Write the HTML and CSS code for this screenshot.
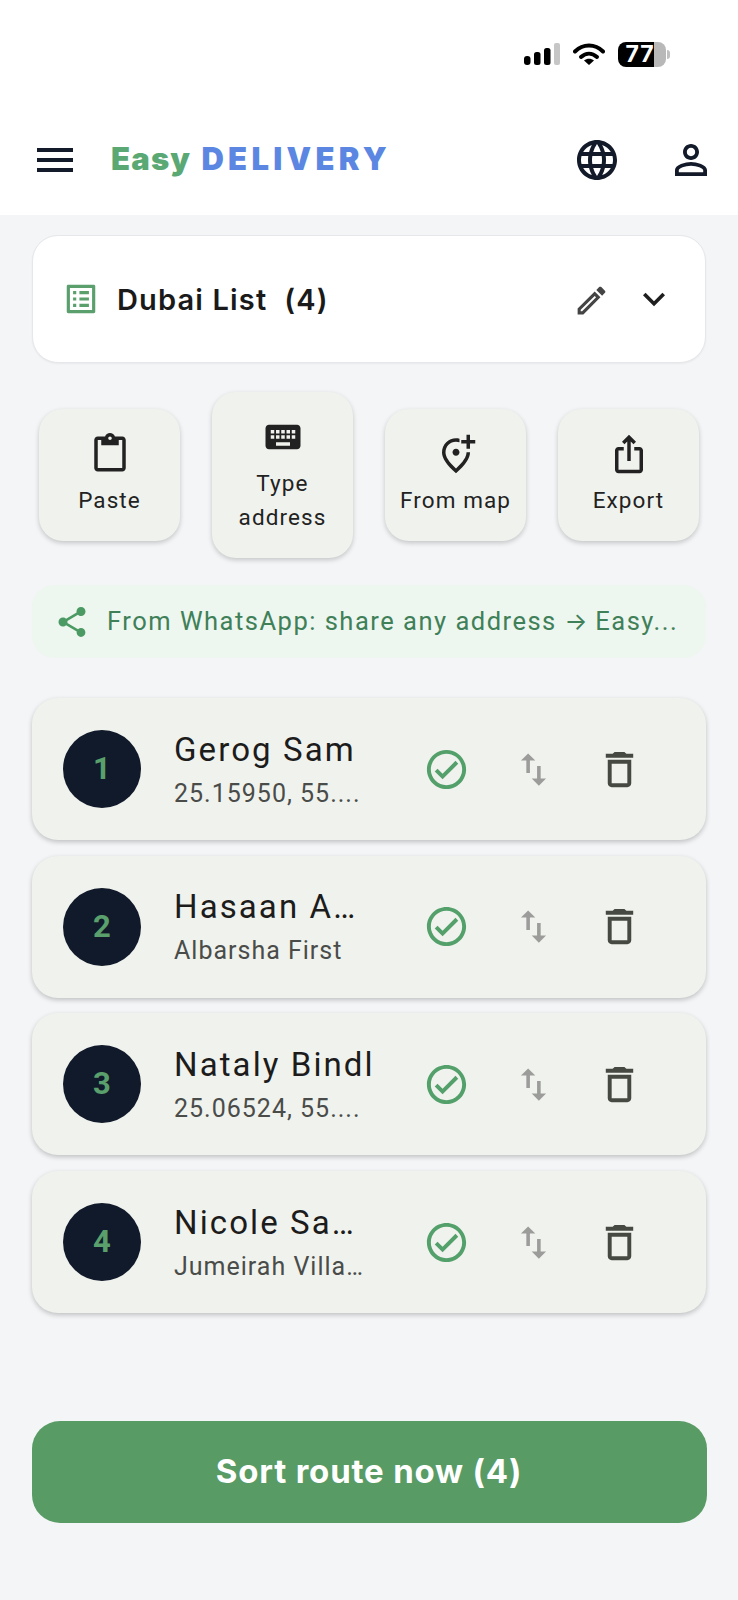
FILE: index.html
```html
<!DOCTYPE html>
<html lang="en">
<head>
<meta charset="utf-8">
<title>Easy Delivery</title>
<link rel="stylesheet" href="styles.css">
</head>
<body>
<header class="app-header">
  <div class="status-bar">
    <svg class="signal" viewBox="0 0 36 22"><rect x="0" y="13" width="6.5" height="9" rx="3" fill="#000"/><rect x="10" y="9" width="6.5" height="13" rx="2.5" fill="#000"/><rect x="20" y="5" width="6.5" height="17" rx="2.5" fill="#000"/><rect x="30" y="0" width="6" height="22" rx="2" fill="#c6c6c6"/></svg>
    <svg class="wifi" viewBox="0 0 32 22"><path d="M2 8.5C10 .5 22 .5 30 8.5" fill="none" stroke="#000" stroke-width="4" stroke-linecap="round"/><path d="M8 14C13 9.5 19 9.5 24 14" fill="none" stroke="#000" stroke-width="4" stroke-linecap="round"/><path d="M16 22l-5-4.5c3-2.500 7-2.500 10 0z" fill="#000"/></svg>
    <div class="battery"><span>77</span></div>
  </div>
  <div class="top-bar">
    <svg class="icon-48 navy" viewBox="0 0 24 24"><path d="M3 18h18v-2H3v2zm0-5h18v-2H3v2zm0-7v2h18V6H3z"/></svg>
    <div class="logo"><span class="logo-easy">Easy</span> <span class="logo-delivery">DELIVERY</span></div>
    <svg class="icon-48 navy push" viewBox="0 0 24 24"><path d="M11.99 2C6.47 2 2 6.48 2 12s4.47 10 9.99 10C17.52 22 22 17.52 22 12S17.52 2 11.99 2zm6.93 6h-2.95c-.32-1.25-.78-2.45-1.38-3.56 1.84.63 3.37 1.91 4.33 3.56zM12 4.04c.83 1.2 1.48 2.53 1.91 3.96h-3.82c.43-1.43 1.08-2.76 1.91-3.96zM4.26 14C4.1 13.36 4 12.69 4 12s.1-1.36.26-2h3.38c-.08.66-.14 1.32-.14 2 0 .68.06 1.34.14 2H4.26zm.82 2h2.95c.32 1.25.78 2.45 1.38 3.56-1.84-.63-3.37-1.9-4.33-3.56zm2.95-8H5.08c.96-1.66 2.49-2.93 4.33-3.56C8.81 5.55 8.35 6.75 8.03 8zM12 19.96c-.83-1.2-1.48-2.53-1.91-3.96h3.82c-.43 1.43-1.08 2.76-1.91 3.96zM14.34 14H9.66c-.09-.66-.16-1.32-.16-2 0-.68.07-1.35.16-2h4.68c.09.65.16 1.32.16 2 0 .68-.07 1.34-.16 2zm.25 5.56c.6-1.11 1.06-2.31 1.38-3.56h2.95c-.96 1.65-2.49 2.93-4.33 3.56zM16.36 14c.08-.66.14-1.32.14-2 0-.68-.06-1.34-.14-2h3.38c.16.64.26 1.31.26 2s-.1 1.36-.26 2h-3.38z"/></svg>
    <svg class="icon-48 navy" viewBox="0 0 24 24"><path d="M12 5.900c1.160 0 2.100.94 2.100 2.100s-.94 2.100-2.100 2.100S9.900 9.160 9.900 8s.94-2.100 2.100-2.100m0 9c2.970 0 6.100 1.460 6.100 2.100v1.100H5.900V17c0-.64 3.130-2.100 6.100-2.100M12 4C9.790 4 8 5.790 8 8s1.790 4 4 4 4-1.790 4-4-1.790-4-4-4zm0 9c-2.670 0-8 1.340-8 4v3h16v-3c0-2.660-5.330-4-8-4z"/></svg>
  </div>
</header>

<main class="content">
  <section class="list-card">
    <svg class="list-icon" viewBox="0 0 24 24"><path d="M19 5v14H5V5h14m1.100-2H3.900c-.5 0-.9.4-.9.9v16.200c0 .4.4.9.9.9h16.200c.4 0 .9-.5.9-.9V3.900c0-.5-.5-.9-.9-.9zM11 7h6v2h-6V7zm0 4h6v2h-6v-2zm0 4h6v2h-6zM7 7h2v2H7zm0 4h2v2H7zm0 4h2v2H7z"/></svg>
    <h1 class="list-title">Dubai List  (4)</h1>
    <svg class="edit-icon" viewBox="0 0 24 24"><path d="M14.060 9.020l.92.92L5.920 19H5v-.92l9.060-9.060M17.660 3c-.25 0-.51.1-.7.29l-1.830 1.830 3.750 3.750 1.830-1.830c.39-.39.39-1.020 0-1.410l-2.340-2.340c-.2-.2-.45-.29-.71-.29zm-3.600 3.190L3 17.250V21h3.750L17.810 9.940l-3.750-3.750z"/></svg>
    <svg class="chevron-icon" viewBox="0 0 24 24"><path d="M16.590 8.590L12 13.170 7.410 8.590 6 10l6 6 6-6z"/></svg>
  </section>

  <section class="actions">
    <button class="action">
      <svg class="action-icon" viewBox="0 0 24 24"><path d="M19 2h-4.180C14.400.84 13.300 0 12 0c-1.300 0-2.400.84-2.820 2H5c-1.100 0-2 .9-2 2v16c0 1.100.9 2 2 2h14c1.100 0 2-.9 2-2V4c0-1.100-.9-2-2-2zm-7 0c.55 0 1 .45 1 1s-.45 1-1 1-1-.45-1-1 .45-1 1-1zm7 18H5V4h2v3h10V4h2v16z"/></svg>
      <span class="action-label">Paste</span>
    </button>
    <button class="action">
      <svg class="action-icon" viewBox="0 0 24 24"><path d="M20 5H4c-1.100 0-1.990.9-1.990 2L2 17c0 1.100.9 2 2 2h16c1.100 0 2-.9 2-2V7c0-1.100-.9-2-2-2zm-9 3h2v2h-2V8zm0 3h2v2h-2v-2zM8 8h2v2H8V8zm0 3h2v2H8v-2zm-1 2H5v-2h2v2zm0-3H5V8h2v2zm9 7H8v-2h8v2zm0-4h-2v-2h2v2zm0-3h-2V8h2v2zm3 3h-2v-2h2v2zm0-3h-2V8h2v2z"/></svg>
      <span class="action-label">Type<br>address</span>
    </button>
    <button class="action">
      <svg class="action-icon" viewBox="0 0 24 24"><path d="M20 1v3h3v2h-3v3h-2V6h-3V4h3V1h2zm-8 12c1.100 0 2-.9 2-2s-.9-2-2-2-2 .9-2 2 .9 2 2 2zm2-9.750V5.300c-.63-.2-1.300-.3-2-.3-3.350 0-6 2.570-6 6.200 0 2.340 1.950 5.440 6 9.140 4.050-3.700 6-6.790 6-9.140V11h2v.2c0 3.320-2.670 7.250-8 11.800-5.330-4.550-8-8.480-8-11.800C4 6.220 7.800 3 12 3c.69 0 1.350.08 2 .25z"/></svg>
      <span class="action-label">From map</span>
    </button>
    <button class="action">
      <svg class="action-icon" viewBox="0 0 24 24"><path d="M16 5l-1.420 1.420-1.590-1.590V16h-1.980V4.830L9.420 6.420 8 5l4-4 4 4zm4 5v11c0 1.100-.9 2-2 2H6c-1.110 0-2-.9-2-2V10c0-1.110.89-2 2-2h3v2H6v11h12V10h-3V8h3c1.100 0 2 .89 2 2z"/></svg>
      <span class="action-label">Export</span>
    </button>
  </section>

  <section class="hint">
    <svg class="hint-icon" viewBox="0 0 24 24"><path d="M18 16.080c-.76 0-1.440.3-1.960.77L8.910 12.700c.05-.23.09-.46.09-.7s-.04-.47-.09-.7l7.050-4.110c.54.5 1.250.81 2.040.81 1.660 0 3-1.340 3-3s-1.340-3-3-3-3 1.340-3 3c0 .24.04.47.09.7L8.040 9.810C7.500 9.310 6.790 9 6 9c-1.660 0-3 1.340-3 3s1.340 3 3 3c.79 0 1.500-.31 2.040-.81l7.120 4.160c-.05.21-.08.43-.08.65 0 1.610 1.310 2.920 2.920 2.920 1.610 0 2.920-1.310 2.920-2.920s-1.310-2.920-2.920-2.920z"/></svg>
    <span class="hint-text">From WhatsApp: share any address <span class="hint-arrow">→</span> Easy...</span>
  </section>

  <section class="stops">
    <article class="stop">
      <div class="badge">1</div>
      <div class="stop-text"><div class="stop-name">Gerog Sam</div><div class="stop-sub">25.15950, 55....</div></div>
      <span class="cell"><svg class="icon-check" viewBox="0 0 24 24"><path d="M12 2C6.480 2 2 6.480 2 12s4.480 10 10 10 10-4.480 10-10S17.520 2 12 2zm0 18c-4.410 0-8-3.590-8-8s3.590-8 8-8 8 3.590 8 8-3.590 8-8 8zm4.590-12.420L10 14.170l-2.590-2.580L6 13l4 4 8-8z"/></svg></span>
      <span class="cell"><svg class="icon-swap" viewBox="0 0 24 24"><path d="M16 17.010V10h-2v7.010h-3L15 21l4-3.990h-3zM9 3L5 6.990h3V14h2V6.990h3L9 3z"/></svg></span>
      <span class="cell"><svg class="icon-trash" viewBox="0 0 24 24"><path d="M6 19c0 1.100.9 2 2 2h8c1.100 0 2-.9 2-2V7H6v12zM8 9h8v10H8V9zm7.500-5l-1-1h-5l-1 1H5v2h14V4h-3.500z"/></svg></span>
    </article>
    <article class="stop">
      <div class="badge">2</div>
      <div class="stop-text"><div class="stop-name">Hasaan A…</div><div class="stop-sub">Albarsha First</div></div>
      <span class="cell"><svg class="icon-check" viewBox="0 0 24 24"><path d="M12 2C6.480 2 2 6.480 2 12s4.480 10 10 10 10-4.480 10-10S17.520 2 12 2zm0 18c-4.410 0-8-3.590-8-8s3.590-8 8-8 8 3.590 8 8-3.590 8-8 8zm4.590-12.420L10 14.170l-2.590-2.580L6 13l4 4 8-8z"/></svg></span>
      <span class="cell"><svg class="icon-swap" viewBox="0 0 24 24"><path d="M16 17.010V10h-2v7.010h-3L15 21l4-3.990h-3zM9 3L5 6.990h3V14h2V6.990h3L9 3z"/></svg></span>
      <span class="cell"><svg class="icon-trash" viewBox="0 0 24 24"><path d="M6 19c0 1.100.9 2 2 2h8c1.100 0 2-.9 2-2V7H6v12zM8 9h8v10H8V9zm7.500-5l-1-1h-5l-1 1H5v2h14V4h-3.500z"/></svg></span>
    </article>
    <article class="stop">
      <div class="badge">3</div>
      <div class="stop-text"><div class="stop-name">Nataly Bindl</div><div class="stop-sub">25.06524, 55....</div></div>
      <span class="cell"><svg class="icon-check" viewBox="0 0 24 24"><path d="M12 2C6.480 2 2 6.480 2 12s4.480 10 10 10 10-4.480 10-10S17.520 2 12 2zm0 18c-4.410 0-8-3.590-8-8s3.590-8 8-8 8 3.590 8 8-3.590 8-8 8zm4.590-12.420L10 14.170l-2.590-2.580L6 13l4 4 8-8z"/></svg></span>
      <span class="cell"><svg class="icon-swap" viewBox="0 0 24 24"><path d="M16 17.010V10h-2v7.010h-3L15 21l4-3.990h-3zM9 3L5 6.990h3V14h2V6.990h3L9 3z"/></svg></span>
      <span class="cell"><svg class="icon-trash" viewBox="0 0 24 24"><path d="M6 19c0 1.100.9 2 2 2h8c1.100 0 2-.9 2-2V7H6v12zM8 9h8v10H8V9zm7.500-5l-1-1h-5l-1 1H5v2h14V4h-3.500z"/></svg></span>
    </article>
    <article class="stop">
      <div class="badge">4</div>
      <div class="stop-text"><div class="stop-name">Nicole Sa…</div><div class="stop-sub">Jumeirah Villa…</div></div>
      <span class="cell"><svg class="icon-check" viewBox="0 0 24 24"><path d="M12 2C6.480 2 2 6.480 2 12s4.480 10 10 10 10-4.480 10-10S17.520 2 12 2zm0 18c-4.410 0-8-3.590-8-8s3.590-8 8-8 8 3.590 8 8-3.590 8-8 8zm4.590-12.420L10 14.170l-2.590-2.580L6 13l4 4 8-8z"/></svg></span>
      <span class="cell"><svg class="icon-swap" viewBox="0 0 24 24"><path d="M16 17.010V10h-2v7.010h-3L15 21l4-3.990h-3zM9 3L5 6.990h3V14h2V6.990h3L9 3z"/></svg></span>
      <span class="cell"><svg class="icon-trash" viewBox="0 0 24 24"><path d="M6 19c0 1.100.9 2 2 2h8c1.100 0 2-.9 2-2V7H6v12zM8 9h8v10H8V9zm7.500-5l-1-1h-5l-1 1H5v2h14V4h-3.500z"/></svg></span>
    </article>
  </section>

  <button class="sort-button">Sort route now (4)</button>
</main>
</body>
</html>
```

FILE: styles.css
```css
* { box-sizing: border-box; }
html, body { margin: 0; padding: 0; }
body {
  width: 738px;
  height: 1600px;
  overflow: hidden;
  background: #f4f5f7;
  font-family: Roboto, "Liberation Sans", sans-serif;
  color: #1c1c1c;
}
svg { display: block; flex: none; fill: currentColor; }

/* Header */
.app-header { background: #fff; height: 215px; }
.status-bar {
  height: 136px;
  padding: 42px 72px 0 0;
  display: flex;
  justify-content: flex-end;
  align-items: flex-start;
}
.signal { width: 36px; height: 22px; margin-top: 1px; }
.wifi { width: 32px; height: 22px; margin: 1px 0 0 13px; }
.battery {
  position: relative;
  width: 48px;
  height: 25px;
  margin-left: 13px;
  border-radius: 8px;
  background: linear-gradient(to right, #000 75%, #b8b8b8 75%);
  color: #fff;
  font: 700 23px/25px Inter, sans-serif;
  letter-spacing: 1px;
  text-align: center;
}
.battery span { display: block; margin-left: -4px; }
.battery::after {
  content: "";
  position: absolute;
  right: -4px;
  top: 8px;
  width: 3px;
  height: 9px;
  border-radius: 0 3px 3px 0;
  background: #c0c0c0;
}
.top-bar {
  height: 48px;
  padding: 0 23px 0 31px;
  display: flex;
  align-items: center;
  color: #131a29;
}
.icon-48 { width: 48px; height: 48px; }
.navy { color: #131a29; }
.push { margin-left: auto; margin-right: 46px; }
.logo {
  margin: -2px 0 0 32px;
  font: 900 31px/48px Inter, sans-serif;
  white-space: pre;
}
.logo-easy { color: #5aa873; letter-spacing: 1.2px; }
.logo-delivery { color: #5b87e2; letter-spacing: 4.3px; margin-left: 4px; }

/* Content */
.content { padding: 20px 32px 0; }
.list-card {
  height: 128px;
  padding: 0 29px;
  display: flex;
  align-items: center;
  background: #fff;
  border: 1px solid #e6e7ea;
  border-radius: 26px;
  box-shadow: 0 1px 2px rgba(0, 0, 0, .05);
}
.list-icon { width: 38px; height: 38px; color: #5a9f6c; margin-right: 1px; }
.list-title {
  margin: 2px 0 0 16px;
  font: 600 29px/36px Inter, sans-serif;
  letter-spacing: 1.15px;
  white-space: pre;
  color: #1a1a1a;
}
.edit-icon { width: 37px; height: 37px; margin: 2px 0 0 auto; color: #444; }
.chevron-icon { width: 44px; height: 44px; margin-left: 22px; color: #1f1f1f; }

.actions {
  margin: 29px 7px 0 7px;
  display: flex;
  justify-content: space-between;
  align-items: center;
}
.action {
  width: 141px;
  padding: 24px 0;
  display: flex;
  flex-direction: column;
  align-items: center;
  gap: 8px;
  border: 0;
  border-radius: 24px;
  background: #f0f2ed;
  box-shadow: 0 2px 5px rgba(0, 0, 0, .2);
  color: #222;
  font-family: inherit;
}
.action-icon { width: 42px; height: 42px; }
.action-label {
  font-size: 22.5px;
  line-height: 34px;
  letter-spacing: 1.1px;
  color: #222;
}

.hint {
  margin-top: 27px;
  height: 73px;
  padding: 0 0 2px 22px;
  display: flex;
  align-items: center;
  gap: 17px;
  background: #edf6ef;
  border-radius: 22px;
}
.hint-icon { width: 36px; height: 36px; margin-top: 2px; color: #4b9a63; }
.hint-text {
  font-size: 25.5px;
  letter-spacing: 1.5px;
  color: #3f8058;
  white-space: nowrap;
}
.hint-arrow { font-family: Inter, sans-serif; font-size: 24px; letter-spacing: 0; }

.stops {
  margin-top: 40px;
  display: flex;
  flex-direction: column;
  gap: 15.7px;
}
.stop {
  height: 142px;
  padding: 0 43px 0 31px;
  display: flex;
  align-items: center;
  background: #f0f2ed;
  border-radius: 26px;
  box-shadow: 0 2px 5px rgba(0, 0, 0, .22);
}
.badge {
  width: 78px;
  height: 78px;
  flex: none;
  border-radius: 50%;
  background: #111a2a;
  color: #5aa06c;
  font: 700 31px/78px Roboto, sans-serif;
  text-align: center;
}
.stop-text { width: 229.500px; margin-left: 33px; flex: none; }
.stop-name {
  font-size: 33px;
  line-height: 42px;
  letter-spacing: 2.1px;
  color: #1c1c1c;
  white-space: nowrap;
}
.stop-sub {
  margin-top: 7px;
  font-size: 25px;
  line-height: 32px;
  letter-spacing: 1px;
  color: #4a4c4a;
  white-space: nowrap;
}
.cell {
  width: 86.500px;
  display: flex;
  justify-content: center;
  flex: none;
}
.icon-check { width: 47px; height: 47px; color: #54a06b; }
.icon-swap { width: 43px; height: 43px; color: #9c9d9a; }
.icon-trash { width: 47px; height: 47px; color: #464842; }

.sort-button {
  display: block;
  width: 675px;
  height: 102px;
  margin: 108px 0 0 -0.5px;
  padding: 0;
  border: 0;
  border-radius: 28px;
  background: #589b65;
  color: #fff;
  font: 700 33px/1.2 Inter, sans-serif;
  letter-spacing: .8px;
}
```
